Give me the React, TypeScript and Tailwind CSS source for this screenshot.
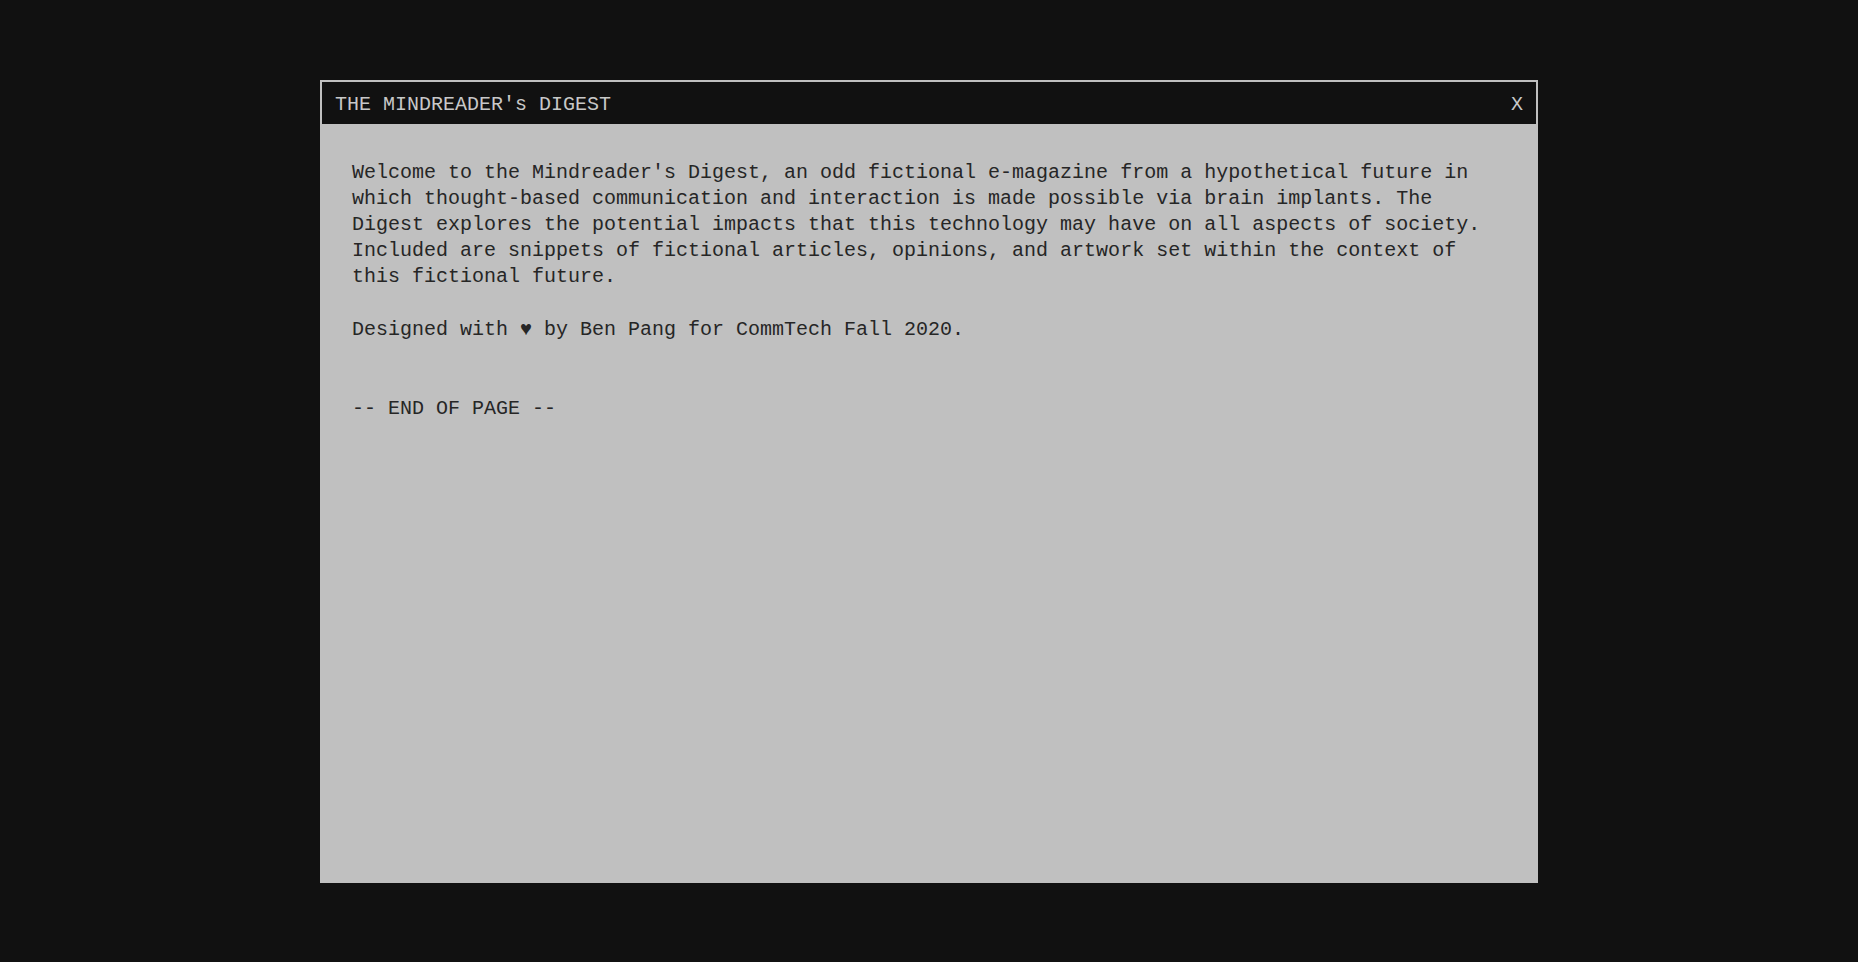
import * as React from 'react';

const App: React.FC = () => {
  return (
    <div className="min-h-screen w-full flex items-center justify-center bg-[#111111] font-['Liberation_Mono','DejaVu_Sans_Mono',monospace]">
      {/* Window */}
      <div className="w-[1218px] h-[803px] flex flex-col border-2 border-[#c0c0c0] bg-[#c0c0c0]">
        {/* Title bar */}
        <div className="h-[42px] flex items-center justify-between pt-[4px] pl-[13px] pr-[13px] bg-[#111111] text-[#c8c8c8] text-[20px] leading-none">
          <span>THE MINDREADER's DIGEST</span>
          <span>X</span>
        </div>

        {/* Content */}
        <div className="flex-1 pt-[36px] px-[30px] text-[#262626] text-[20px] leading-[26px]">
          <p>
            Welcome to the Mindreader's Digest, an odd fictional e-magazine from a hypothetical future in
            <br />
            which thought-based communication and interaction is made possible via brain implants. The
            <br />
            Digest explores the potential impacts that this technology may have on all aspects of society.
            <br />
            Included are snippets of fictional articles, opinions, and artwork set within the context of
            <br />
            this fictional future.
          </p>
          <p className="mt-[27px]">Designed with ♥ by Ben Pang for CommTech Fall 2020.</p>
          <p className="mt-[53px]">-- END OF PAGE --</p>
        </div>
      </div>
    </div>
  );
};

export default App;
